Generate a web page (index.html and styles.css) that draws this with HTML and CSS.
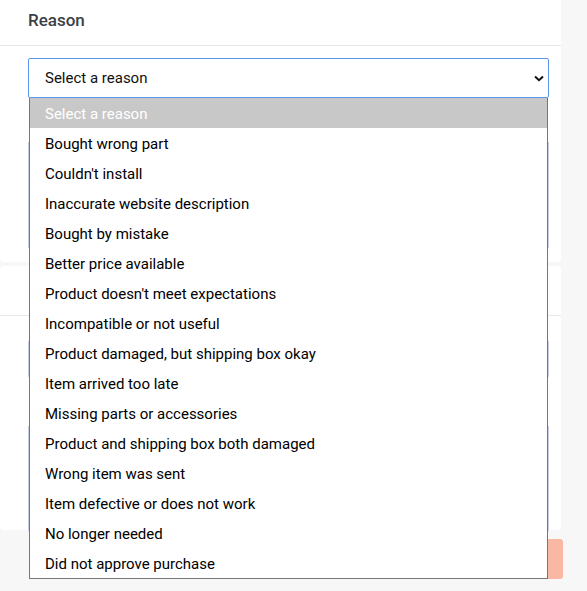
FILE: index.html
```html
<!DOCTYPE html>
<html>
<head>
    <meta charset="utf-8">
    <title>Return Reason</title>
    <link rel="stylesheet" href="styles.css">
</head>
<body>

<div id="main">
    <!--reason card-->
    <div class="card card-first">
        <p class="title">Reason</p>
        <div class="body">
            <div class="picker">
                <div class="select">
                    <span>Select a reason</span>
                    <svg class="chev" width="10" height="7" viewBox="0 0 10 7"><path d="M1 1.5 L5 5.2 L9 1.5" fill="none" stroke="#111" stroke-width="2"/></svg>
                </div>
                <ul class="options">
                    <li class="on">Select a reason</li>
                    <li>Bought wrong part</li>
                    <li>Couldn't install</li>
                    <li>Inaccurate website description</li>
                    <li>Bought by mistake</li>
                    <li>Better price available</li>
                    <li>Product doesn't meet expectations</li>
                    <li>Incompatible or not useful</li>
                    <li>Product damaged, but shipping box okay</li>
                    <li>Item arrived too late</li>
                    <li>Missing parts or accessories</li>
                    <li>Product and shipping box both damaged</li>
                    <li>Wrong item was sent</li>
                    <li>Item defective or does not work</li>
                    <li>No longer needed</li>
                    <li>Did not approve purchase</li>
                </ul>
            </div>
            <div class="area area-first"></div>
        </div>
    </div>

    <!--comments card (covered by the open list)-->
    <div class="card card-second">
        <div class="title"></div>
        <div class="body">
            <div class="field"></div>
            <div class="area area-second"></div>
        </div>
    </div>

    <div class="actions">
        <div class="submit"></div>
    </div>
</div>

</body>
</html>
```

FILE: styles.css
```css
*{ margin: 0; padding: 0; box-sizing: border-box; }
ul{ list-style: none; }
body{ background: #f7f7f7; font-family: Roboto, "Liberation Sans", sans-serif; }

#main{ width: 561px; }

.card{ background: #fff; border-radius: 0 0 4px 4px; }
.card .title{ height: 46px; padding: 9px 28px 0; font: 500 17px/22px Roboto, sans-serif; color: #3b4046; border-bottom: 1px solid #e8e8e8; }
.card .body{ padding: 12px 12px 0 28px; }

.card-first{ height: 262px; }
.card-second{ height: 264px; margin-top: 4px; border-radius: 4px; }
.card-second .title{ height: 50px; }

/*select*/
.picker{ position: relative; }
.select{ height: 40px; border: 1px solid #5b95ec; border-radius: 2px; padding: 0 16px; display: flex; align-items: center; justify-content: space-between; font-size: 15px; color: #111; }
.select .chev{ margin-right: -12px; }

.options{ position: absolute; left: 1px; top: 40px; width: 519px; z-index: 2; background: #fff; border: 1px solid #767676; border-top: none; }
.options li{ height: 30px; padding: 2px 0 0 15px; line-height: 28px; font-size: 15px; color: #000; }
.options li.on{ background: #c8c8c8; color: #fff; }

.area, .field{ border: 1px solid #c7cde6; border-radius: 2px; }
.area-first{ height: 108px; margin-top: 43px; }
.field{ height: 38px; margin-top: 12px; }
.area-second{ height: 107px; margin-top: 47px; }

.actions{ display: flex; justify-content: flex-end; padding-top: 9px; margin-right: -2px; }
.submit{ width: 100px; height: 40px; border-radius: 3px; background: #f9b8a3; }
```
